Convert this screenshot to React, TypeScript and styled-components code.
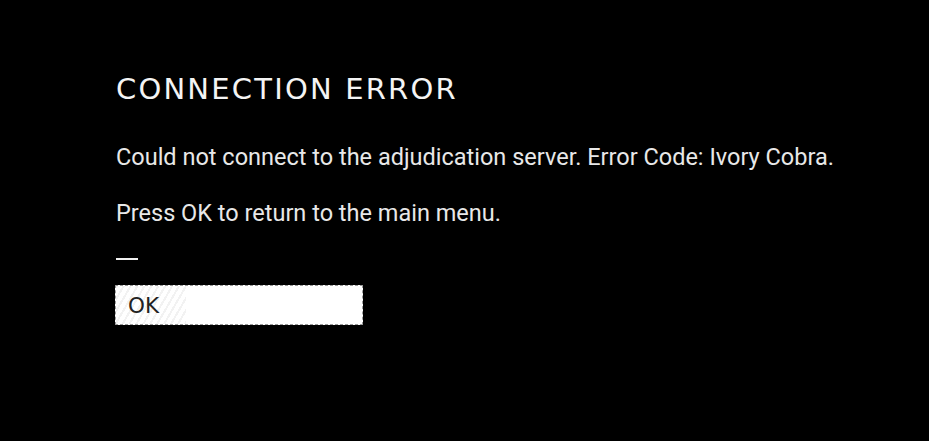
import React from "react"
import styled, { createGlobalStyle } from "styled-components"

const GlobalStyle = createGlobalStyle`
  html, body {
    margin: 0;
    padding: 0;
    background: #000;
  }
`

const ErrorScreen = styled.div`
  width: 929px;
  height: 441px;
  background: #000;
  box-sizing: border-box;
  padding: 73px 0 0 116px;
  display: flex;
  flex-direction: column;
`

const Title = styled.h1`
  margin: 0;
  font-family: "DejaVu Sans", Roboto, sans-serif;
  font-weight: 400;
  font-size: 29px;
  line-height: 32px;
  color: #f4f4f4;
  letter-spacing: 2.2px;
`

const Message = styled.p`
  margin: 0;
  font-family: Roboto, "Liberation Sans", sans-serif;
  font-size: 23.5px;
  line-height: 24px;
  color: #e8e8e8;
`

const Body = styled.div`
  margin-top: 40px;
  display: flex;
  flex-direction: column;
  gap: 32px;
`

const Divider = styled.div`
  width: 22px;
  height: 2px;
  background: #f0f0f0;
  margin-top: 33px;
`

const OkButton = styled.button`
  margin: 25px 0 0 -1px;
  width: 248px;
  height: 40px;
  box-sizing: border-box;
  border: 1px dashed #9a9a9a;
  background:
    repeating-linear-gradient(
      -60deg,
      rgba(0, 0, 0, 0.05) 0 2px,
      transparent 2px 6px
    ) left / 70px 100% no-repeat,
    #fff;
  text-align: left;
  padding: 0 12px;
  font-family: "DejaVu Sans", Roboto, sans-serif;
  font-size: 21.5px;
  color: #222;
  cursor: pointer;
`

export default function App() {
  return (
    <>
      <GlobalStyle />
      <ErrorScreen>
        <Title>CONNECTION ERROR</Title>
        <Body>
          <Message>
            Could not connect to the adjudication server. Error Code: Ivory Cobra.
          </Message>
          <Message>Press OK to return to the main menu.</Message>
        </Body>
        <Divider />
        <OkButton>OK</OkButton>
      </ErrorScreen>
    </>
  )
}
